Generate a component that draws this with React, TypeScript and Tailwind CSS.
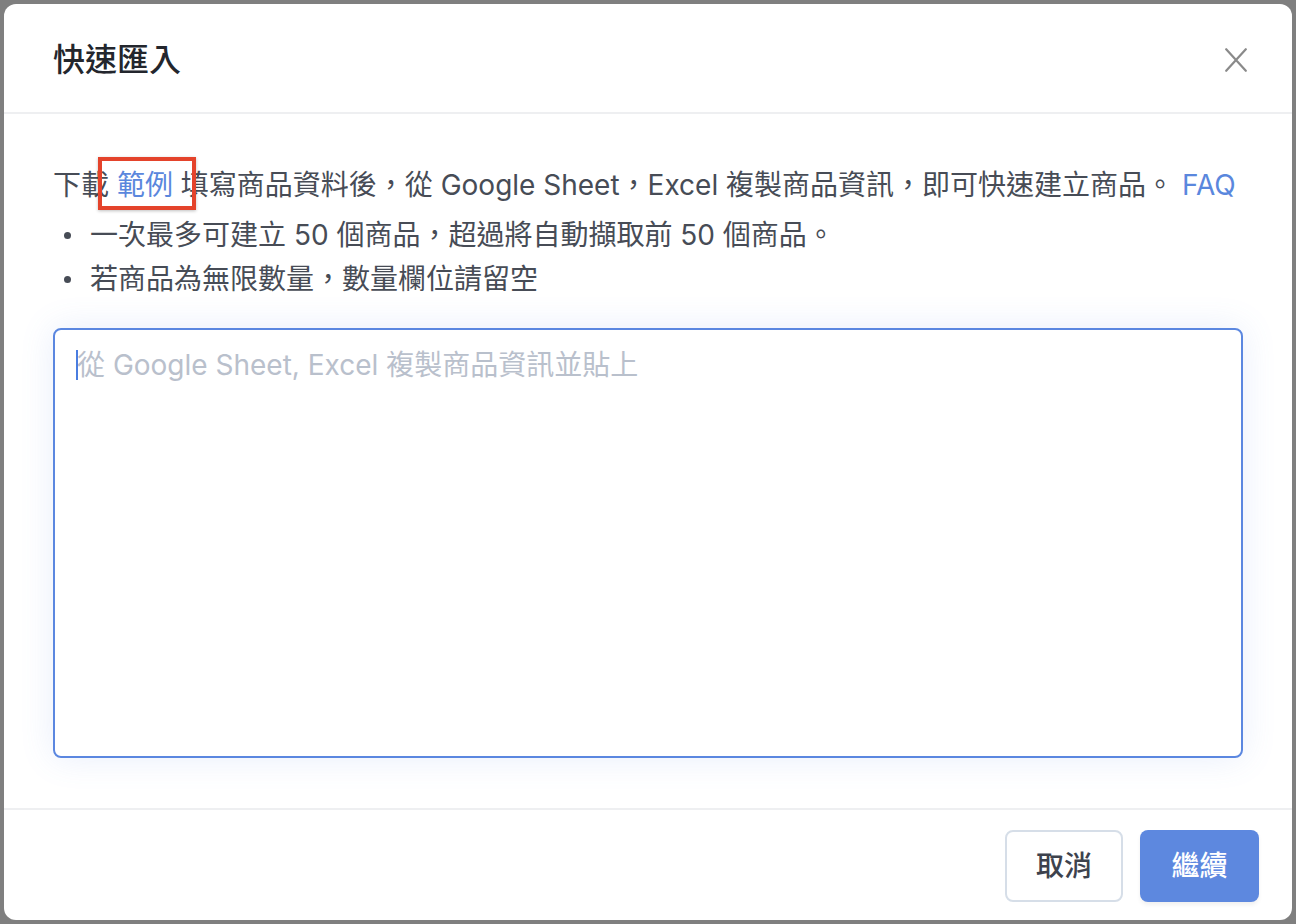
import { useState } from 'react';

const FONT = "font-['Inter','Noto_Sans_CJK_TC',sans-serif]";

const CloseIcon = () => (
  <svg width="22" height="24" viewBox="0 0 22 24" fill="none">
    <path d="M1.2 1.2L20.8 22.8M20.8 1.2L1.2 22.8" stroke="#8a8a8a" strokeWidth="2.2" strokeLinecap="round" />
  </svg>
);

const App = () => {
  const [text, setText] = useState('');

  return (
    <div className={`h-[924px] w-full bg-[#7f7f7f] p-1 ${FONT}`}>
      <div className="flex h-[916px] flex-col rounded-[12px] bg-white">
        {/* header */}
        <div className="flex h-[110px] items-center justify-between border-b-2 border-[#eeeff1] pl-[49px] pr-[45px] pt-[4px]">
          <h1 className="text-[32px] font-medium text-[#23262d]">快速匯入</h1>
          <button className="flex h-[24px] w-[22px] items-center justify-center">
            <CloseIcon />
          </button>
        </div>

        {/* body */}
        <div className="flex flex-1 flex-col px-[49px] pb-[50px] pt-[49px] text-[28px] leading-[44px] text-[#474c56]">
          <p className="whitespace-nowrap">
            下載{' '}
            <span className="relative text-[#5a87dd]">
              範例
              <span className="pointer-events-none absolute -bottom-[8px] -left-[19px] -right-[23px] -top-[11px] border-[4px] border-[#e4432b] shadow-[0_1px_3px_rgba(0,0,0,0.25)]" />
            </span>{' '}
            填寫商品資料後，從 Google Sheet，Excel 複製商品資訊，即可快速建立商品。{' '}
            <a className="text-[#5a87dd]">FAQ</a>
          </p>
          <ul className="mt-[6px]">
            <li className="flex items-center">
              <span className="ml-[11px] mr-[19px] h-[7px] w-[7px] rounded-full bg-[#474c56]" />
              一次最多可建立 50 個商品，超過將自動擷取前 50 個商品。
            </li>
            <li className="flex items-center">
              <span className="ml-[11px] mr-[19px] h-[7px] w-[7px] rounded-full bg-[#474c56]" />
              若商品為無限數量，數量欄位請留空
            </li>
          </ul>
          <div className="relative mt-[27px] flex-1">
            <textarea
              value={text}
              onChange={(e) => setText(e.target.value)}
              placeholder="從 Google Sheet, Excel 複製商品資訊並貼上"
              className="h-full w-full resize-none rounded-[8px] border-2 border-[#5b87e0] px-[22px] py-[13px] text-[28px] leading-[44px] text-[#474c56] shadow-[0_0_34px_rgba(91,135,224,0.14)] outline-none placeholder:text-[#b9c0cc]"
            />
            {text === '' && (
              <span className="pointer-events-none absolute left-[23px] top-[22px] h-[30px] w-[2px] bg-[#4a7de0]" />
            )}
          </div>
        </div>

        {/* footer */}
        <div className="flex justify-end gap-[17px] border-t-2 border-[#eeeff1] pb-[18px] pr-[33px] pt-[20px]">
          <button className="h-[72px] w-[118px] rounded-[8px] border-2 border-[#d6dee8] bg-white text-[28px] font-medium text-[#3d424d]">
            取消
          </button>
          <button className="h-[72px] w-[119px] rounded-[8px] bg-[#5d88df] text-[28px] font-medium text-white shadow-[0_3px_4px_rgba(0,0,0,0.06)]">
            繼續
          </button>
        </div>
      </div>
    </div>
  );
};

export default App;
